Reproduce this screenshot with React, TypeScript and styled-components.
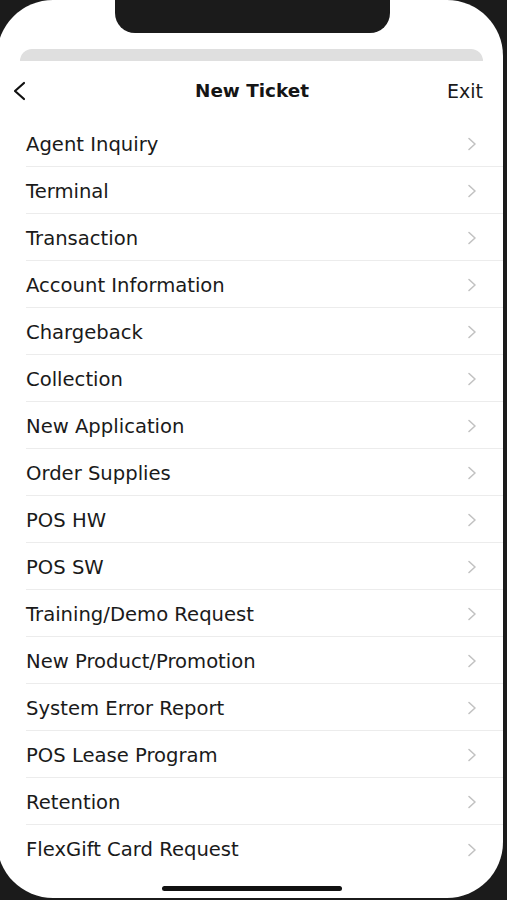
import React from "react";
import styled, { createGlobalStyle } from "styled-components";

const Global = createGlobalStyle`
  html, body { margin: 0; padding: 0; background: #1b1b1b; overflow: hidden; }
  body { width: 507px; height: 900px; font-family: "DejaVu Sans", "Liberation Sans", sans-serif; }
`;

const Screen = styled.div`
  position: relative;
  margin-left: -3px;
  width: 506px;
  height: 898px;
  background: #ffffff;
  border-radius: 56px;
  overflow: hidden;
  display: flex;
  flex-direction: column;
  padding-top: 49px;
  box-sizing: border-box;
`;

const Notch = styled.div`
  position: absolute;
  top: -20px;
  left: 118px;
  width: 275px;
  height: 53px;
  background: #1b1b1b;
  border-radius: 20px;
`;

const BackSheet = styled.div`
  height: 12px;
  margin: 0 20px 0 23px;
  background: #dfdfdf;
  border-radius: 12px 12px 0 0;
`;

const Header = styled.header`
  height: 59px;
  display: grid;
  grid-template-columns: 1fr auto 1fr;
  align-items: center;
  padding: 0 20px 0 24px;
`;

const BackButton = styled.button`
  justify-self: start;
  margin-left: -9px;
  background: none;
  border: 0;
  padding: 0;
  width: 16px;
  height: 20px;
  display: flex;
  color: #111;
`;

const Title = styled.h1`
  margin: 0;
  font-size: 18.4px;
  font-weight: 700;
  color: #151515;
`;

const ExitButton = styled.button`
  justify-self: end;
  background: none;
  border: 0;
  padding: 0;
  font-family: inherit;
  font-size: 19px;
  color: #1a1a1a;
`;

const List = styled.ul`
  list-style: none;
  margin: 0;
  padding: 0;
`;

const Row = styled.li<{ $last?: boolean }>`
  margin-left: 29px;
  height: 47px;
  box-sizing: border-box;
  display: flex;
  align-items: center;
  justify-content: space-between;
  padding-right: 26px;
  padding-top: 2px;
  border-bottom: ${(p) => (p.$last ? "none" : "1.5px solid #ececec")};
`;

const Label = styled.span`
  font-size: 19.6px;
  color: #1a1a1a;
`;

const Chevron = styled.svg`
  width: 10px;
  height: 14px;
  display: block;
`;

const HomeBar = styled.div`
  position: absolute;
  bottom: 7px;
  left: 165px;
  width: 180px;
  height: 5px;
  border-radius: 3px;
  background: #111;
`;

const items = [
  "Agent Inquiry",
  "Terminal",
  "Transaction",
  "Account Information",
  "Chargeback",
  "Collection",
  "New Application",
  "Order Supplies",
  "POS HW",
  "POS SW",
  "Training/Demo Request",
  "New Product/Promotion",
  "System Error Report",
  "POS Lease Program",
  "Retention",
  "FlexGift Card Request",
];

export default function App() {
  return (
    <>
      <Global />
      <Screen>
        <Notch />
        <BackSheet />
        <Header>
          <BackButton aria-label="Back">
            <svg width="16" height="20" viewBox="0 0 16 20">
              <path d="M12 2 L3 10 L12 18" fill="none" stroke="#111" strokeWidth="2.2" strokeLinecap="round" strokeLinejoin="round" />
            </svg>
          </BackButton>
          <Title>New Ticket</Title>
          <ExitButton>Exit</ExitButton>
        </Header>
        <List>
          {items.map((t, i) => (
            <Row key={t} $last={i === items.length - 1}>
              <Label>{t}</Label>
              <Chevron viewBox="0 0 10 14">
                <path d="M2 1.5 L8 7 L2 12.5" fill="none" stroke="#c2c2c2" strokeWidth="1.6" strokeLinecap="round" strokeLinejoin="round" />
              </Chevron>
            </Row>
          ))}
        </List>
        <HomeBar />
      </Screen>
    </>
  );
}
